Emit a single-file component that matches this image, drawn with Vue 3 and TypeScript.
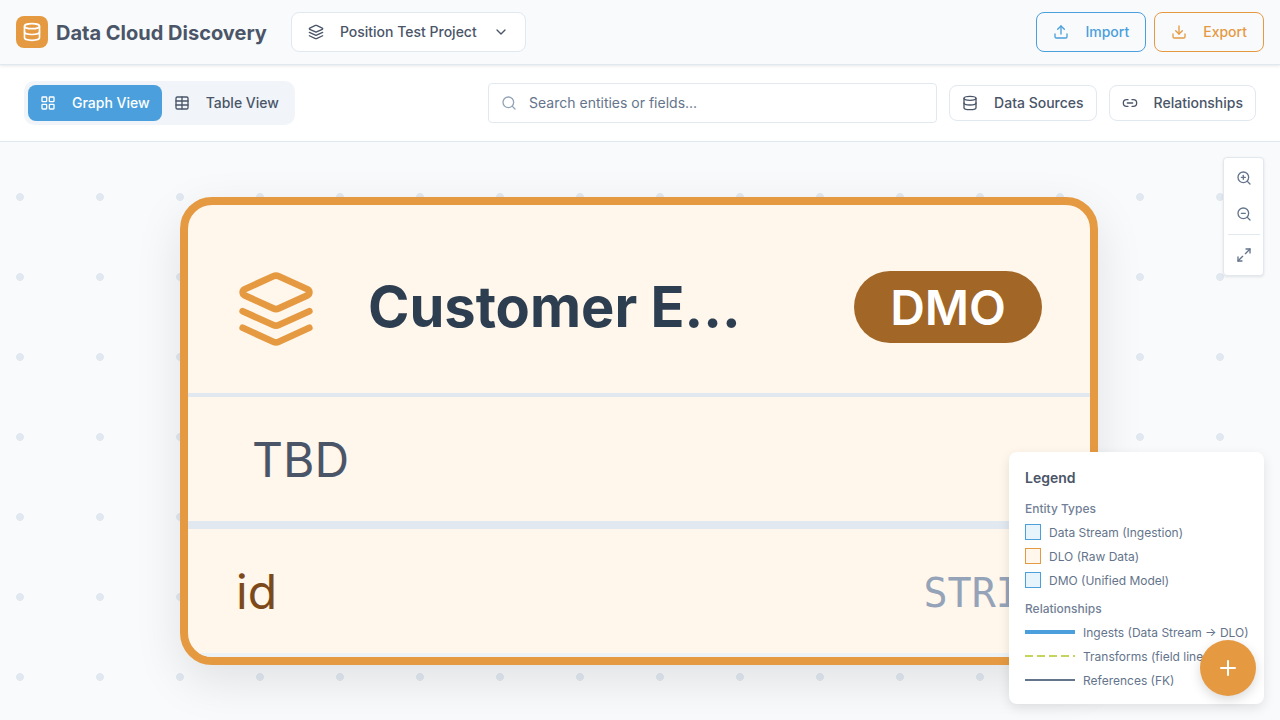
<script setup lang="ts">
const legendTypes = [
  { label: 'Data Stream (Ingestion)', kind: 'blue' },
  { label: 'DLO (Raw Data)', kind: 'orange' },
  { label: 'DMO (Unified Model)', kind: 'blue' },
]
</script>

<template>
  <div class="app">
    <header class="topbar">
      <div class="brand">
        <span class="logo">
          <svg width="20" height="20" viewBox="0 0 24 24" fill="none" stroke="currentColor" stroke-width="2" stroke-linecap="round" stroke-linejoin="round">
            <ellipse cx="12" cy="5" rx="9" ry="3" />
            <path d="M3 5v14a9 3 0 0 0 18 0V5" />
            <path d="M3 12a9 3 0 0 0 18 0" />
          </svg>
        </span>
        <span class="brand-name">Data Cloud Discovery</span>
      </div>
      <button class="project">
        <svg class="ico" width="16" height="16" viewBox="0 0 24 24" fill="none" stroke="currentColor" stroke-width="2" stroke-linecap="round" stroke-linejoin="round">
          <path d="m12.83 2.18a2 2 0 0 0-1.66 0L2.6 6.08a1 1 0 0 0 0 1.83l8.58 3.91a2 2 0 0 0 1.66 0l8.58-3.9a1 1 0 0 0 0-1.83Z" />
          <path d="m22 17.65-9.17 4.16a2 2 0 0 1-1.66 0L2 17.65" />
          <path d="m22 12.65-9.17 4.16a2 2 0 0 1-1.66 0L2 12.65" />
        </svg>
        <span>Position Test Project</span>
        <svg class="chev" width="16" height="16" viewBox="0 0 24 24" fill="none" stroke="currentColor" stroke-width="2" stroke-linecap="round" stroke-linejoin="round">
          <path d="m6 9 6 6 6-6" />
        </svg>
      </button>
      <div class="top-actions">
        <button class="outline import">
          <svg width="16" height="16" viewBox="0 0 24 24" fill="none" stroke="currentColor" stroke-width="2" stroke-linecap="round" stroke-linejoin="round">
            <path d="M21 15v4a2 2 0 0 1-2 2H5a2 2 0 0 1-2-2v-4" />
            <path d="m17 8-5-5-5 5" />
            <path d="M12 3v12" />
          </svg>
          <span>Import</span>
        </button>
        <button class="outline export">
          <svg width="16" height="16" viewBox="0 0 24 24" fill="none" stroke="currentColor" stroke-width="2" stroke-linecap="round" stroke-linejoin="round">
            <path d="M21 15v4a2 2 0 0 1-2 2H5a2 2 0 0 1-2-2v-4" />
            <path d="m7 10 5 5 5-5" />
            <path d="M12 15V3" />
          </svg>
          <span>Export</span>
        </button>
      </div>
    </header>

    <div class="toolbar">
      <div class="tabs">
        <button class="tab active">
          <svg width="16" height="16" viewBox="0 0 24 24" fill="none" stroke="currentColor" stroke-width="2" stroke-linecap="round" stroke-linejoin="round">
            <rect x="3" y="3" width="7" height="7" rx="1" />
            <rect x="14" y="3" width="7" height="7" rx="1" />
            <rect x="14" y="14" width="7" height="7" rx="1" />
            <rect x="3" y="14" width="7" height="7" rx="1" />
          </svg>
          <span>Graph View</span>
        </button>
        <button class="tab">
          <svg width="16" height="16" viewBox="0 0 24 24" fill="none" stroke="currentColor" stroke-width="2" stroke-linecap="round" stroke-linejoin="round">
            <path d="M12 3v18" />
            <rect x="3" y="3" width="18" height="18" rx="2" />
            <path d="M3 9h18" />
            <path d="M3 15h18" />
          </svg>
          <span>Table View</span>
        </button>
      </div>
      <div class="tool-right">
        <label class="search">
          <svg width="16" height="16" viewBox="0 0 24 24" fill="none" stroke="currentColor" stroke-width="2" stroke-linecap="round" stroke-linejoin="round">
            <circle cx="11" cy="11" r="8" />
            <path d="m21 21-4.3-4.3" />
          </svg>
          <input placeholder="Search entities or fields..." />
        </label>
        <button class="plain">
          <svg width="16" height="16" viewBox="0 0 24 24" fill="none" stroke="currentColor" stroke-width="2" stroke-linecap="round" stroke-linejoin="round">
            <ellipse cx="12" cy="5" rx="9" ry="3" />
            <path d="M3 5v14a9 3 0 0 0 18 0V5" />
            <path d="M3 12a9 3 0 0 0 18 0" />
          </svg>
          <span>Data Sources</span>
        </button>
        <button class="plain">
          <svg width="16" height="16" viewBox="0 0 24 24" fill="none" stroke="currentColor" stroke-width="2" stroke-linecap="round" stroke-linejoin="round">
            <path d="M9 17H7A5 5 0 0 1 7 7h2" />
            <path d="M15 7h2a5 5 0 1 1 0 10h-2" />
            <line x1="8" x2="16" y1="12" y2="12" />
          </svg>
          <span>Relationships</span>
        </button>
      </div>
    </div>

    <main class="canvas">
      <div class="node">
        <div class="node-head">
          <svg class="node-ico" width="80" height="80" viewBox="0 0 24 24" fill="none" stroke="currentColor" stroke-width="2" stroke-linecap="round" stroke-linejoin="round">
            <path d="m12.83 2.18a2 2 0 0 0-1.66 0L2.6 6.08a1 1 0 0 0 0 1.83l8.58 3.91a2 2 0 0 0 1.66 0l8.58-3.9a1 1 0 0 0 0-1.83Z" />
            <path d="m22 17.65-9.17 4.16a2 2 0 0 1-1.66 0L2 17.65" />
            <path d="m22 12.65-9.17 4.16a2 2 0 0 1-1.66 0L2 12.65" />
          </svg>
          <span class="node-title">Customer E...</span>
          <span class="node-badge">DMO</span>
        </div>
        <div class="node-group">TBD</div>
        <div class="node-field">
          <span class="field-name">id</span>
          <span class="field-type">STRING</span>
        </div>
      </div>

      <div class="zoom">
        <button>
          <svg width="16" height="16" viewBox="0 0 24 24" fill="none" stroke="currentColor" stroke-width="2" stroke-linecap="round" stroke-linejoin="round">
            <circle cx="11" cy="11" r="8" />
            <line x1="21" x2="16.65" y1="21" y2="16.65" />
            <line x1="11" x2="11" y1="8" y2="14" />
            <line x1="8" x2="14" y1="11" y2="11" />
          </svg>
        </button>
        <button>
          <svg width="16" height="16" viewBox="0 0 24 24" fill="none" stroke="currentColor" stroke-width="2" stroke-linecap="round" stroke-linejoin="round">
            <circle cx="11" cy="11" r="8" />
            <line x1="21" x2="16.65" y1="21" y2="16.65" />
            <line x1="8" x2="14" y1="11" y2="11" />
          </svg>
        </button>
        <i class="zoom-sep"></i>
        <button>
          <svg width="16" height="16" viewBox="0 0 24 24" fill="none" stroke="currentColor" stroke-width="2" stroke-linecap="round" stroke-linejoin="round">
            <path d="M15 3h6v6" />
            <path d="m21 3-7 7" />
            <path d="m3 21 7-7" />
            <path d="M9 21H3v-6" />
          </svg>
        </button>
      </div>

      <aside class="legend">
        <h4>Legend</h4>
        <h5>Entity Types</h5>
        <div v-for="t in legendTypes" :key="t.label" class="legend-row">
          <i class="swatch" :class="t.kind"></i>
          <span>{{ t.label }}</span>
        </div>
        <h5 class="second">Relationships</h5>
        <div class="legend-row wide">
          <i class="line ingest"></i>
          <span>Ingests (Data Stream → DLO)</span>
        </div>
        <div class="legend-row wide">
          <i class="line transform"></i>
          <span>Transforms (field lineage)</span>
        </div>
        <div class="legend-row wide">
          <i class="line ref"></i>
          <span>References (FK)</span>
        </div>
      </aside>

      <button class="fab">
        <svg width="24" height="24" viewBox="0 0 24 24" fill="none" stroke="currentColor" stroke-width="2" stroke-linecap="round" stroke-linejoin="round">
          <path d="M5 12h14" />
          <path d="M12 5v14" />
        </svg>
      </button>
    </main>
  </div>
</template>

<style>
html,
body {
  margin: 0;
  height: 100%;
  overflow: hidden;
}
</style>

<style scoped>
.app {
  width: 1280px;
  height: 720px;
  display: flex;
  flex-direction: column;
  overflow: hidden;
  font-family: Inter, "Liberation Sans", sans-serif;
  color: #4a5568;
  background: #f8fafc;
}

button {
  font-family: inherit;
  line-height: 20px;
  cursor: pointer;
}

.topbar {
  position: relative;
  z-index: 2;
  box-sizing: border-box;
  height: 65px;
  flex: none;
  display: flex;
  align-items: center;
  padding: 0 16px;
  background: #f8fafc;
  border-bottom: 1px solid #e2e8f0;
  box-shadow: 0 1px 3px rgba(0, 0, 0, 0.1);
}

.brand {
  display: flex;
  align-items: center;
  gap: 8px;
}

.logo {
  width: 32px;
  height: 32px;
  border-radius: 8px;
  background: #e59a42;
  color: #fff;
  display: flex;
  align-items: center;
  justify-content: center;
}

.brand-name {
  font-size: 20px;
  line-height: 28px;
  padding-top: 2px;
  font-weight: 700;
  color: #4a5568;
}

.project {
  margin-left: 24px;
  box-sizing: border-box;
  width: 235px;
  height: 40px;
  display: flex;
  align-items: center;
  padding: 0 16px;
  background: #fff;
  border: 1px solid #e2e8f0;
  border-radius: 8px;
  color: #4a5568;
  font-size: 14px;
  font-weight: 500;
}

.project span {
  margin-left: 16px;
}

.project .chev {
  margin-left: auto;
}

.top-actions {
  margin-left: auto;
  display: flex;
  gap: 8px;
}

.outline {
  box-sizing: border-box;
  height: 40px;
  display: flex;
  align-items: center;
  gap: 16px;
  padding: 0 16px;
  background: transparent;
  border: 1px solid currentColor;
  border-radius: 8px;
  font-size: 14px;
  font-weight: 500;
}

.import {
  color: #4a9fdc;
}

.export {
  color: #e59a42;
}

.toolbar {
  box-sizing: border-box;
  height: 77px;
  flex: none;
  display: flex;
  align-items: center;
  justify-content: space-between;
  padding: 0 24px;
  background: #fff;
  border-bottom: 1px solid #e2e8f0;
}

.tabs {
  display: flex;
  padding: 4px;
  background: #f1f5f9;
  border-radius: 10px;
}

.tab {
  height: 36px;
  display: flex;
  align-items: center;
  gap: 16px;
  padding: 0 12px;
  border: 0;
  border-radius: 8px;
  background: transparent;
  color: #4a5568;
  font-size: 14px;
  font-weight: 500;
}

.tab.active {
  background: #4a9fdc;
  color: #fff;
}

.tool-right {
  display: flex;
  align-items: center;
  gap: 12px;
}

.search {
  box-sizing: border-box;
  width: 449px;
  height: 40px;
  display: flex;
  align-items: center;
  gap: 12px;
  padding: 0 12px;
  background: #fff;
  border: 1px solid #e2e8f0;
  border-radius: 4px;
  color: #94a3b8;
}

.search input {
  flex: 1;
  min-width: 0;
  height: 20px;
  border: 0;
  outline: 0;
  padding: 0;
  font-family: inherit;
  font-size: 14px;
  line-height: 20px;
  color: #4a5568;
  background: transparent;
}

.search input::placeholder {
  color: #64748b;
  opacity: 1;
}

.plain {
  box-sizing: border-box;
  height: 36px;
  display: flex;
  align-items: center;
  gap: 16px;
  padding: 0 12px;
  background: #fff;
  border: 1px solid #e2e8f0;
  border-radius: 8px;
  color: #4a5568;
  font-size: 14px;
  font-weight: 500;
}

.canvas {
  position: relative;
  flex: 1;
  overflow: hidden;
  background-color: #f8fafc;
  background-image: radial-gradient(circle, #e2e8f0 3.6px, transparent 4.2px);
  background-size: 80px 80px;
  background-position: -20px 15px;
}

.node {
  position: absolute;
  left: 180px;
  top: 55px;
  box-sizing: border-box;
  width: 918px;
  height: 468px;
  background: #fff6ec;
  border: 8px solid #e59a42;
  border-radius: 32px;
  box-shadow: 0 16px 48px rgba(0, 0, 0, 0.1);
  overflow: hidden;
}

.node-head {
  box-sizing: border-box;
  height: 192px;
  display: flex;
  align-items: center;
  padding: 16px 48px 0;
  border-bottom: 4px solid #e2e8f0;
}

.node-ico {
  color: #e59a42;
  flex: none;
  margin-top: 3px;
}

.node-title {
  margin-left: 52px;
  font-size: 56px;
  font-weight: 700;
  color: #2d3e50;
  white-space: nowrap;
}

.node-badge {
  margin-left: auto;
  height: 72px;
  padding: 0 36px;
  display: flex;
  align-items: center;
  border-radius: 36px;
  background: #a26626;
  color: #fff;
  font-size: 48px;
  font-weight: 600;
}

.node-group {
  box-sizing: border-box;
  height: 132px;
  display: flex;
  align-items: center;
  padding-left: 64px;
  font-size: 48px;
  color: #4a5568;
  border-bottom: 8px solid #e2e8f0;
}

.node-field {
  box-sizing: border-box;
  height: 128px;
  display: flex;
  align-items: center;
  justify-content: space-between;
  padding: 0 22px 0 48px;
  border-bottom: 4px solid #edf2f7;
}

.field-name {
  font-size: 48px;
  color: #7c4a1a;
}

.field-type {
  font-family: "DejaVu Sans Mono", monospace;
  font-size: 40px;
  padding-top: 4px;
  color: #94a3b8;
}

.zoom {
  position: absolute;
  top: 15px;
  right: 16px;
  box-sizing: border-box;
  width: 41px;
  padding: 4px 0;
  display: flex;
  flex-direction: column;
  align-items: center;
  background: #fff;
  border: 1px solid #e2e8f0;
  border-radius: 4px;
  box-shadow: 0 1px 3px rgba(0, 0, 0, 0.1);
}

.zoom button {
  width: 32px;
  height: 32px;
  padding: 0;
  display: flex;
  align-items: center;
  justify-content: center;
  border: 0;
  background: transparent;
  color: #64748b;
}

.zoom button + button {
  margin-top: 4px;
}

.zoom-sep {
  display: block;
  width: 32px;
  height: 1px;
  margin: 4px 0;
  background: #e2e8f0;
}

.legend {
  position: absolute;
  right: 16px;
  bottom: 16px;
  box-sizing: border-box;
  width: 255px;
  height: 252px;
  padding: 16px;
  background: #fff;
  border-radius: 8px;
  box-shadow: 0 4px 12px rgba(0, 0, 0, 0.1);
  font-size: 12px;
  color: #64748b;
}

.legend h4 {
  margin: 0 0 13px;
  font-size: 14px;
  line-height: 20px;
  font-weight: 600;
  color: #4a5568;
}

.legend h5 {
  margin: 0 0 3px;
  font-size: 12px;
  line-height: 16px;
  font-weight: 500;
  color: #718096;
}

.legend h5.second {
  margin-top: 9px;
}

.legend-row {
  height: 24px;
  display: flex;
  align-items: center;
  gap: 8px;
  white-space: nowrap;
}

.swatch {
  box-sizing: border-box;
  width: 16px;
  height: 16px;
  border: 1px solid;
}

.swatch.blue {
  background: #e8f4fc;
  border-color: #4a9fdc;
}

.swatch.orange {
  background: #fff6ec;
  border-color: #e59a42;
}

.line {
  width: 50px;
  flex: none;
  display: block;
}

.ingest {
  height: 4px;
  background: #4a9fdc;
}

.transform {
  height: 2px;
  background: repeating-linear-gradient(90deg, #c5d45c 0 8px, transparent 8px 12px);
}

.ref {
  height: 2px;
  background: #64748b;
}

.fab {
  position: absolute;
  right: 24px;
  bottom: 24px;
  width: 56px;
  height: 56px;
  padding: 0;
  display: flex;
  align-items: center;
  justify-content: center;
  border: 0;
  border-radius: 50%;
  background: #e59a42;
  color: #fff;
  box-shadow: 0 4px 12px rgba(0, 0, 0, 0.15);
}
</style>
